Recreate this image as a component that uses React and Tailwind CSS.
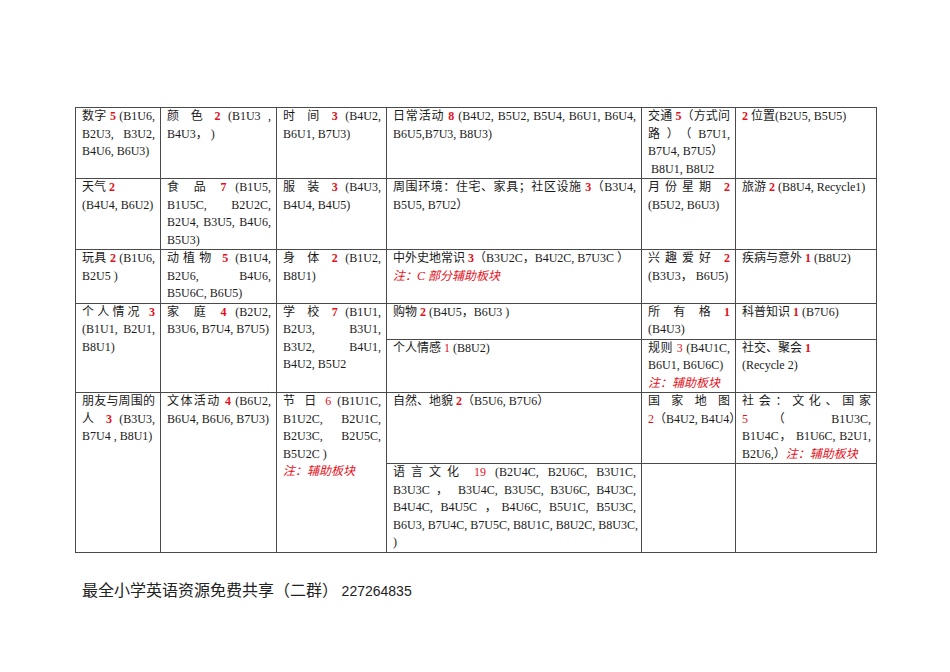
import React from "react";

const R = ({ children, b = true }) => (
  <span className={"text-[#e3101b] " + (b ? "font-bold" : "")}>{children}</span>
);
const Note = ({ children }) => (
  <span className="text-[#e3101b] italic">{children}</span>
);
const L = ({ children }) => (
  <span className="block whitespace-nowrap text-justify [text-align-last:justify]">{children}</span>
);

const C = ({ children, rs, cls = "" }) => (
  <td
    rowSpan={rs}
    className={"border border-[#4a4a4a] align-top pl-[6px] pr-[5px] pt-0 pb-0 text-justify " + cls}
  >
    {children}
  </td>
);

export default function App() {
  return (
    <div className="bg-white w-[950px] h-[672px] pt-[107px] pl-[75px] text-[#1a1a1a]">
      <table
        className="table-fixed border-collapse w-[801px] text-[12px] leading-[17.5px]"
        style={{ fontFamily: '"Liberation Serif", "Noto Sans CJK SC", serif' }}
      >
        <colgroup>
          <col className="w-[85px]" />
          <col className="w-[116px]" />
          <col className="w-[110px]" />
          <col className="w-[255px]" />
          <col className="w-[94px]" />
          <col className="w-[141px]" />
        </colgroup>
        <tbody>
          <tr className="h-[70px]">
            <C>数字 <R>5</R> (B1U6, B2U3, B3U2, B4U6, B6U3)</C>
            <C>颜 色 <R>2</R> (B1U3 , B4U3， )</C>
            <C>时 间 <R>3</R> (B4U2, B6U1, B7U3)</C>
            <C>日常活动 <R>8</R> (B4U2, B5U2, B5U4, B6U1, B6U4, B6U5,B7U3, B8U3)</C>
            <C>交通 <R>5</R>（方式问路）（B7U1, B7U4, B7U5）<br />&nbsp;B8U1, B8U2</C>
            <C><R>2</R> 位置(B2U5, B5U5)</C>
          </tr>
          <tr className="h-[70px]">
            <C>天气 <R>2</R><br />(B4U4, B6U2)</C>
            <C>食 品 <R>7</R> (B1U5, B1U5C, B2U2C, B2U4, B3U5, B4U6, B5U3)</C>
            <C>服 装 <R>3</R> (B4U3, B4U4, B4U5)</C>
            <C>周围环境：住宅、家具；社区设施 <R>3</R>（B3U4, B5U5, B7U2）</C>
            <C>月份星期 <R>2</R> (B5U2, B6U3)</C>
            <C>旅游 <R>2</R> (B8U4, Recycle1)</C>
          </tr>
          <tr className="h-[52px]">
            <C>玩具 <R>2</R> (B1U6, B2U5 )</C>
            <C>动植物 <R>5</R> (B1U4, B2U6, B4U6, B5U6C, B6U5)</C>
            <C>身 体 <R>2</R> (B1U2, B8U1)</C>
            <C>
              中外史地常识 <R>3</R>（B3U2C，B4U2C, B7U3C ）<br />
              <Note>注：C 部分辅助板块</Note>
            </C>
            <C>兴趣爱好 <R>2</R> (B3U3， B6U5)</C>
            <C>疾病与意外 <R>1</R> (B8U2)</C>
          </tr>
          <tr className="h-[35px]">
            <C rs={2}>个人情况 <R>3</R> (B1U1, B2U1, B8U1)</C>
            <C rs={2}>家 庭 <R>4</R> (B2U2, B3U6, B7U4, B7U5)</C>
            <C rs={2}>学 校 <R>7</R> (B1U1, B2U3, B3U1, B3U2, B4U1, B4U2, B5U2</C>
            <C>购物 <R>2</R> (B4U5，B6U3 )</C>
            <C>所 有 格 <R>1</R> (B4U3)</C>
            <C>科普知识 <R>1</R> (B7U6)</C>
          </tr>
          <tr className="h-[53px]">
            <C>个人情感 <R b={false}>1</R> (B8U2)</C>
            <C>
              规则 <R b={false}>3</R> (B4U1C, B6U1, B6U6C)<br />
              <Note>注：辅助板块</Note>
            </C>
            <C>社交、聚会 <R>1</R><br />(Recycle 2)</C>
          </tr>
          <tr className="h-[69px]">
            <C rs={2}>朋友与周围的人 <R>3</R> (B3U3, B7U4 , B8U1)</C>
            <C rs={2}>文体活动 <R>4</R> (B6U2, B6U4, B6U6, B7U3)</C>
            <C rs={2}>
              节 日 <R b={false}>6</R> (B1U1C, B1U2C, B2U1C, B2U3C, B2U5C, B5U2C )<br />
              <Note>注：辅助板块</Note>
            </C>
            <C>自然、地貌 <R>2</R>（B5U6, B7U6）</C>
            <C>
              <L>国家地图</L>
              <span className="whitespace-nowrap"><R b={false}>2</R>（B4U2, B4U4）</span>
            </C>
            <C>
              <L>社会：文化、国家</L>
              <L><R b={false}>5</R> （ B1U3C,</L>
              <L>B1U4C， B1U6C, B2U1,</L>
              <span className="whitespace-nowrap">B2U6,）<Note>注：辅助板块</Note></span>
            </C>
          </tr>
          <tr className="h-[89px]">
            <C>
              <L>语言文化 <R b={false}>19</R> (B2U4C, B2U6C, B3U1C,</L>
              <L>B3U3C ， B3U4C, B3U5C, B3U6C, B4U3C,</L>
              <L>B4U4C, B4U5C ，B4U6C, B5U1C, B5U3C,</L>
              <L>B6U3, B7U4C, B7U5C, B8U1C, B8U2C, B8U3C,</L>
              )
            </C>
            <C> </C>
            <C> </C>
          </tr>
        </tbody>
      </table>
      <div
        className="mt-[25px] pl-[7px] text-[16px] leading-[22px] text-[#222]"
        style={{ fontFamily: '"Noto Sans CJK SC", "Liberation Sans", sans-serif' }}
      >
        最全小学英语资源免费共享（二群）{" "}
        <span className="text-[14px]" style={{ fontFamily: '"Liberation Sans", sans-serif' }}>
          227264835
        </span>
      </div>
    </div>
  );
}
